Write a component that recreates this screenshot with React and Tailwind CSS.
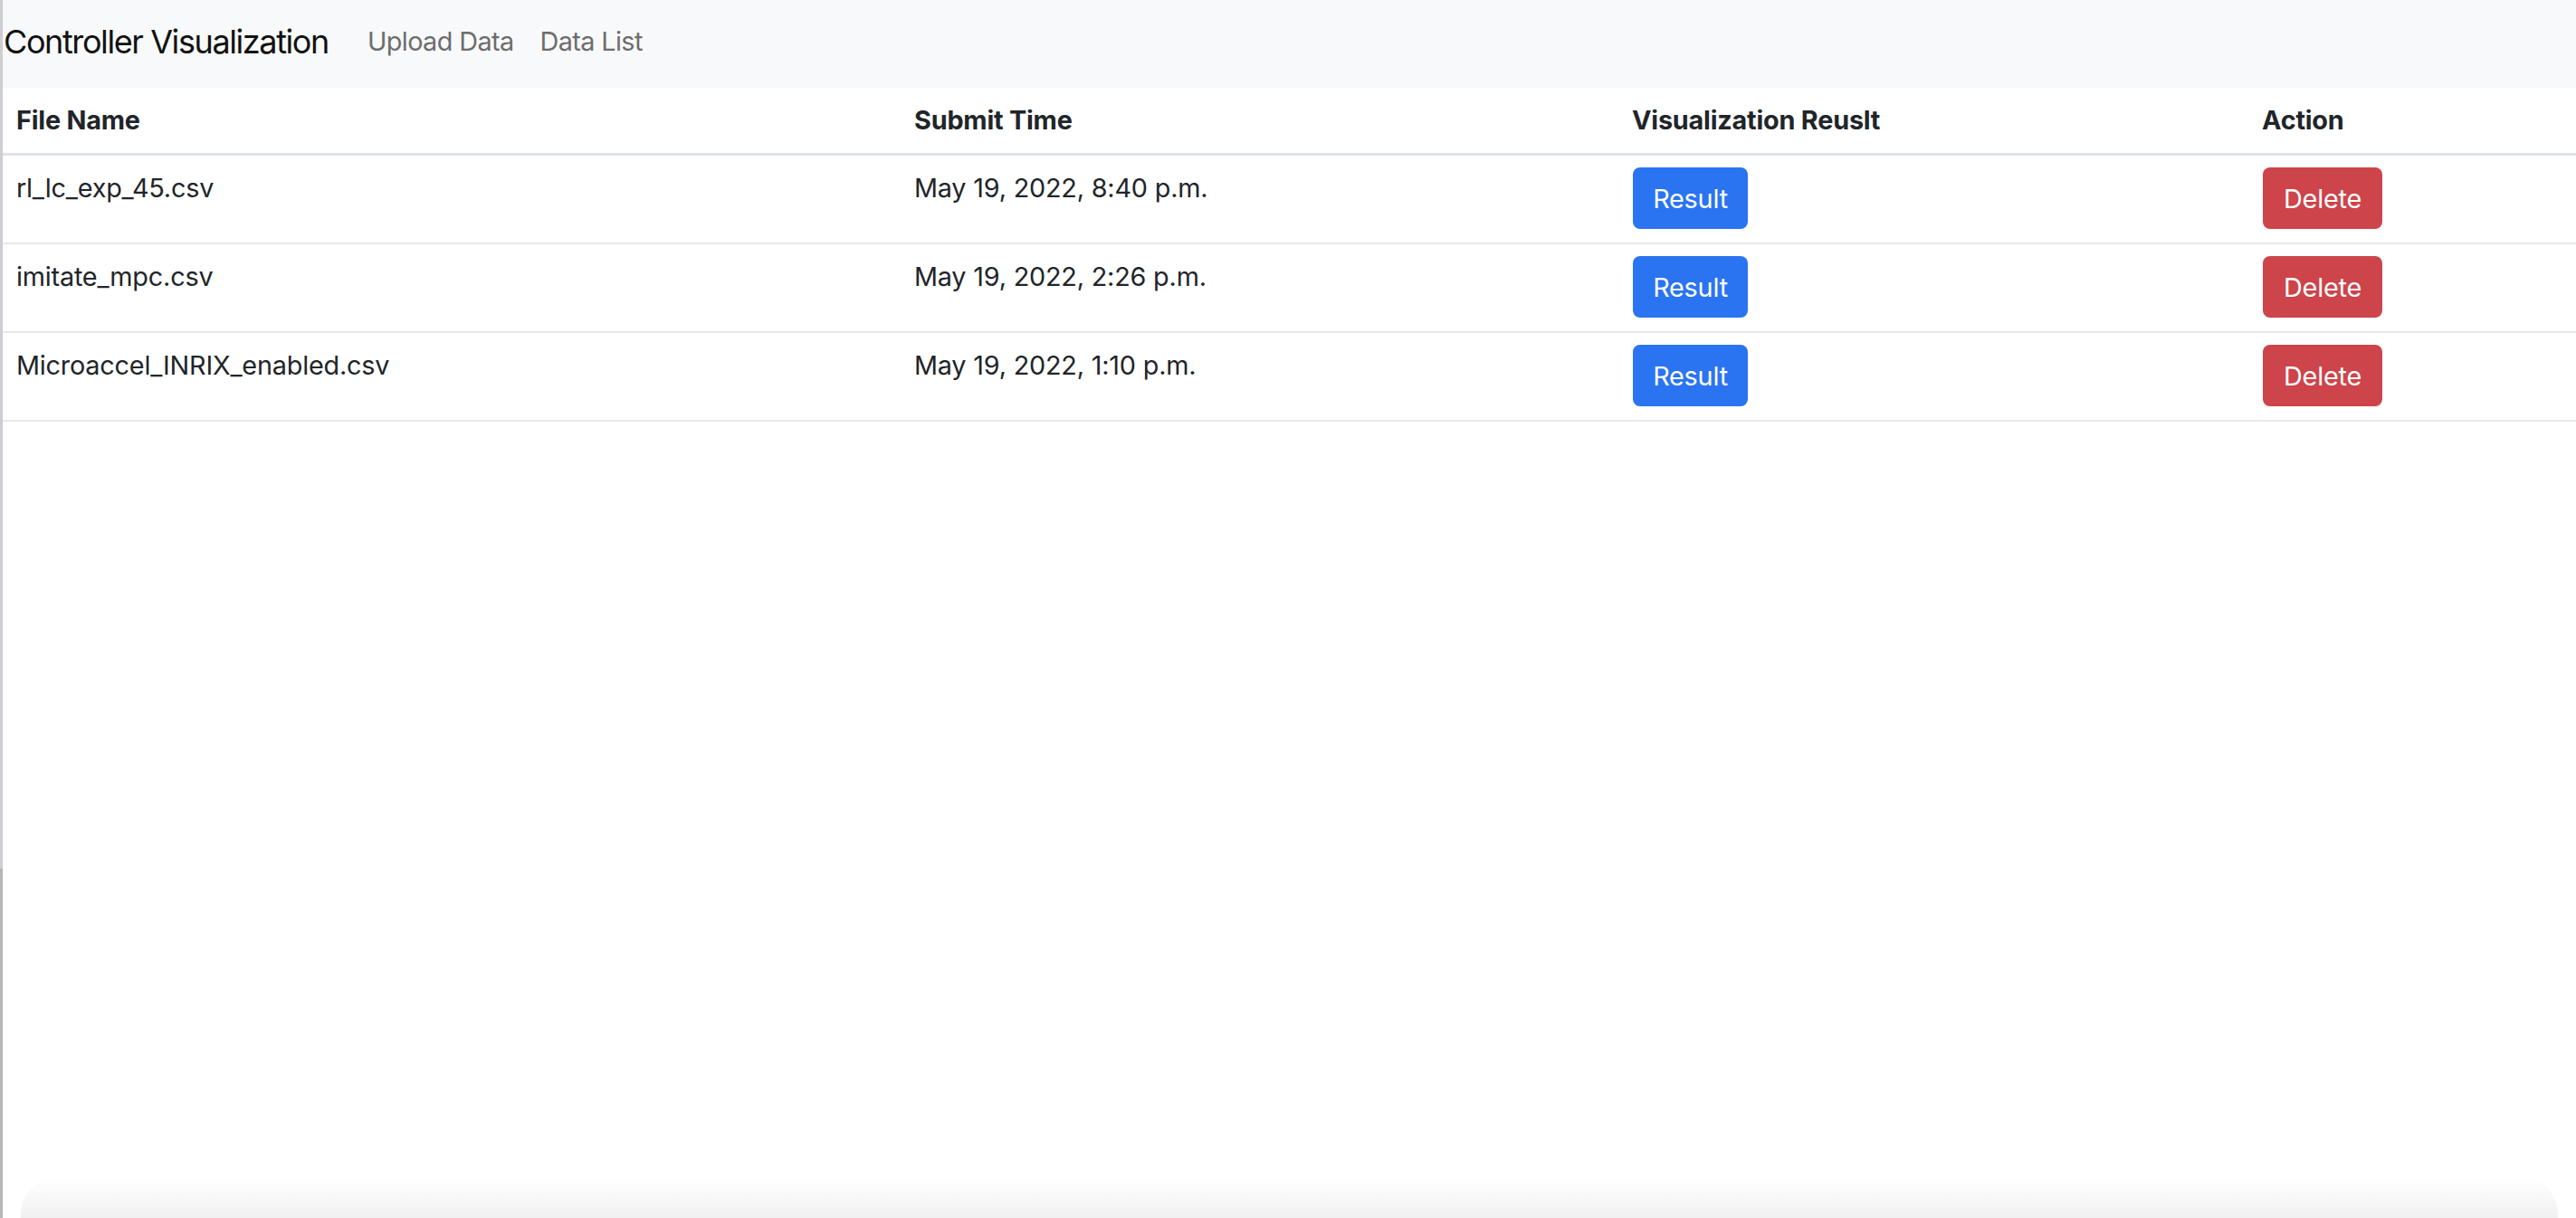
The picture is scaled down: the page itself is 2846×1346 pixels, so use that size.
import React from "react";

const rows = [
  { name: "rl_lc_exp_45.csv", time: "May 19, 2022, 8:40 p.m." },
  { name: "imitate_mpc.csv", time: "May 19, 2022, 2:26 p.m." },
  { name: "Microaccel_INRIX_enabled.csv", time: "May 19, 2022, 1:10 p.m." },
];

const cols = "grid grid-cols-[992px_793px_696px_1fr]";

export default function App() {
  return (
    <div
      className="flex h-[1346px] w-full bg-white text-[#212529]"
      style={{ fontFamily: "Inter, 'Noto Sans', sans-serif" }}
    >
      <div className="flex w-[3px] flex-col">
        <div className="h-[960px] bg-[#cfccd3]" />
        <div className="flex-1 bg-[#b6b6b4]" />
      </div>
      <div className="flex min-w-0 flex-1 flex-col">
        <nav className="flex h-[97px] items-center bg-[#f8f9fa] pb-[6px] pl-[1px]">
          <span className="text-[36px] leading-[54px] tracking-[-1.4px] text-[#111]">
            Controller Visualization
          </span>
          <div className="ml-[43px] flex items-center gap-[29px] text-[28.8px] leading-[43px] tracking-[-0.6px] text-[#6d6d6d]">
            <span>Upload Data</span>
            <span>Data List</span>
          </div>
        </nav>
        <div className="flex flex-col">
          <div className={`${cols} h-[75px] border-b-[3px] border-[#dee2e6] text-[28.8px] font-bold leading-[43px] tracking-[-0.2px]`}>
            <div className="px-[15px] pt-[14px]">File Name</div>
            <div className="px-[15px] pt-[14px]">Submit Time</div>
            <div className="px-[15px] pt-[14px]">Visualization Reuslt</div>
            <div className="px-[15px] pt-[14px]">Action</div>
          </div>
          {rows.map((r) => (
            <div
              key={r.name}
              className={`${cols} border-b-[2px] border-[#e6e8eb] text-[28.8px] leading-[43px] tracking-[-0.2px]`}
            >
              <div className="px-[15px] pt-[14px]">{r.name}</div>
              <div className="px-[15px] pt-[14px]">{r.time}</div>
              <div className="px-[16px] pt-[13px] pb-[15px]">
                <button className="h-[68px] w-[127px] rounded-[8px] bg-[#2a74f1] text-[28.8px] leading-[43px] text-white">
                  Result
                </button>
              </div>
              <div className="px-[16px] pt-[13px] pb-[15px]">
                <button className="h-[68px] w-[132px] rounded-[8px] bg-[#cd444b] text-[28.8px] leading-[43px] text-white">
                  Delete
                </button>
              </div>
            </div>
          ))}
        </div>
        <div className="flex-1" />
        <div className="mx-[20px] h-[45px] rounded-t-[40px] bg-gradient-to-b from-white to-[#f1f1f1]" />
      </div>
    </div>
  );
}
